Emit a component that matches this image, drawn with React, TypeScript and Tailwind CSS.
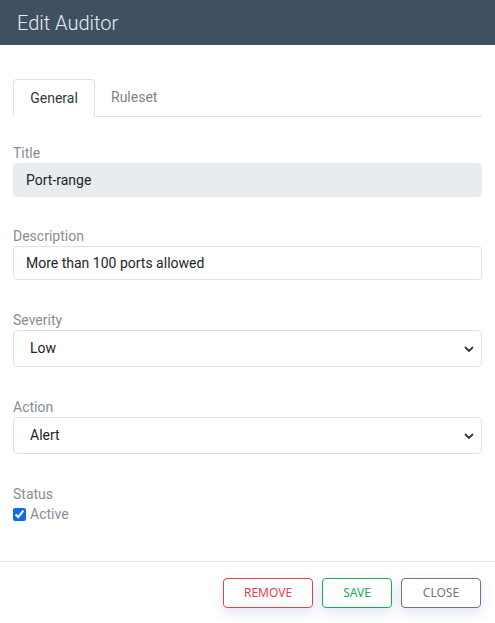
import React from "react"

const font = { fontFamily: "Roboto, 'Liberation Sans', sans-serif" }

function Field({ label, children }: { label: string; children: React.ReactNode }) {
    return (
        <div className="flex flex-col">
            <label className="text-[14px] leading-[19px] text-[#868e96]">{label}</label>
            {children}
        </div>
    )
}

function Select({ value }: { value: string }) {
    return (
        <div className="relative">
            <select
                defaultValue={value}
                className="w-full h-[37px] appearance-none rounded-[4px] border border-[#dee2e6] bg-white pl-[16px] pr-8 text-[14px] text-[#212529] outline-none"
            >
                <option>{value}</option>
            </select>
            <svg
                className="pointer-events-none absolute right-[8px] top-1/2 -translate-y-1/2"
                width="10"
                height="8"
                viewBox="0 0 10 8"
            >
                <path d="M1.5 2.5 L5 6 L8.5 2.5" fill="none" stroke="#343a40" strokeWidth="1.8" strokeLinecap="round" strokeLinejoin="round" />
            </svg>
        </div>
    )
}

const btnFont = { fontFamily: "'Noto Sans', sans-serif" }

export default function App() {
    return (
        <div className="w-[495px] h-[623px] bg-white flex flex-col" style={font}>
            <div className="h-[45px] bg-[#3e5061] flex items-center px-[17px]">
                <h1 className="text-[20px] text-[#e9edf0] font-light">Edit Auditor</h1>
            </div>

            <div className="flex-1 px-[13px] pt-[34px]">
                <div className="flex border-b border-[#dee2e6] h-[38px]">
                    <div className="-mb-px flex items-center px-[16px] w-[82px] justify-center rounded-t-[4px] border border-[#dee2e6] border-b-white bg-white text-[14px] text-[#343a40]">
                        General
                    </div>
                    <div className="flex items-center px-[16px] text-[14px] text-[#7b848c]">Ruleset</div>
                </div>

                <div className="mt-[27px] flex flex-col gap-[30px]">
                    <Field label="Title">
                        <input
                            readOnly
                            value="Port-range"
                            className="h-[34px] rounded-[4px] border border-[#e9ecef] bg-[#e9ecef] px-[12px] text-[14px] text-[#212529] outline-none"
                        />
                    </Field>
                    <Field label="Description">
                        <input
                            readOnly
                            value="More than 100 ports allowed"
                            className="h-[34px] rounded-[4px] border border-[#dee2e6] bg-white px-[12px] text-[14px] text-[#212529] outline-none"
                        />
                    </Field>
                    <div className="mt-[1px] flex flex-col gap-[31px]">
                        <Field label="Severity">
                            <Select value="Low" />
                        </Field>
                        <Field label="Action">
                            <Select value="Alert" />
                        </Field>
                        <Field label="Status">
                            <label className="mt-[1px] flex items-center gap-[4px] text-[14px] leading-[19px] text-[#868e96]">
                                <input type="checkbox" defaultChecked className="h-[13px] w-[13px] accent-[#0b6cf0]" />
                                Active
                            </label>
                        </Field>
                    </div>
                </div>
            </div>

            <div className="h-[62px] border-t border-[#e5e7eb] flex items-center justify-end gap-[9px] pr-[14px] pt-[1px]">
                <button
                    className="h-[30px] w-[90px] rounded-[4px] border border-[#e8404f] bg-white text-[12px] text-[#e8404f] shadow-[0_5px_12px_rgba(60,80,190,0.15)]"
                    style={btnFont}
                >
                    REMOVE
                </button>
                <button
                    className="h-[30px] w-[70px] rounded-[4px] border border-[#1aaa55] bg-white text-[12px] text-[#1aaa55] shadow-[0_5px_12px_rgba(60,80,190,0.15)]"
                    style={btnFont}
                >
                    SAVE
                </button>
                <button
                    className="h-[30px] w-[80px] rounded-[4px] border border-[#6c7580] bg-white text-[12px] text-[#6c7580] shadow-[0_5px_12px_rgba(60,80,190,0.15)]"
                    style={btnFont}
                >
                    CLOSE
                </button>
            </div>
        </div>
    )
}
